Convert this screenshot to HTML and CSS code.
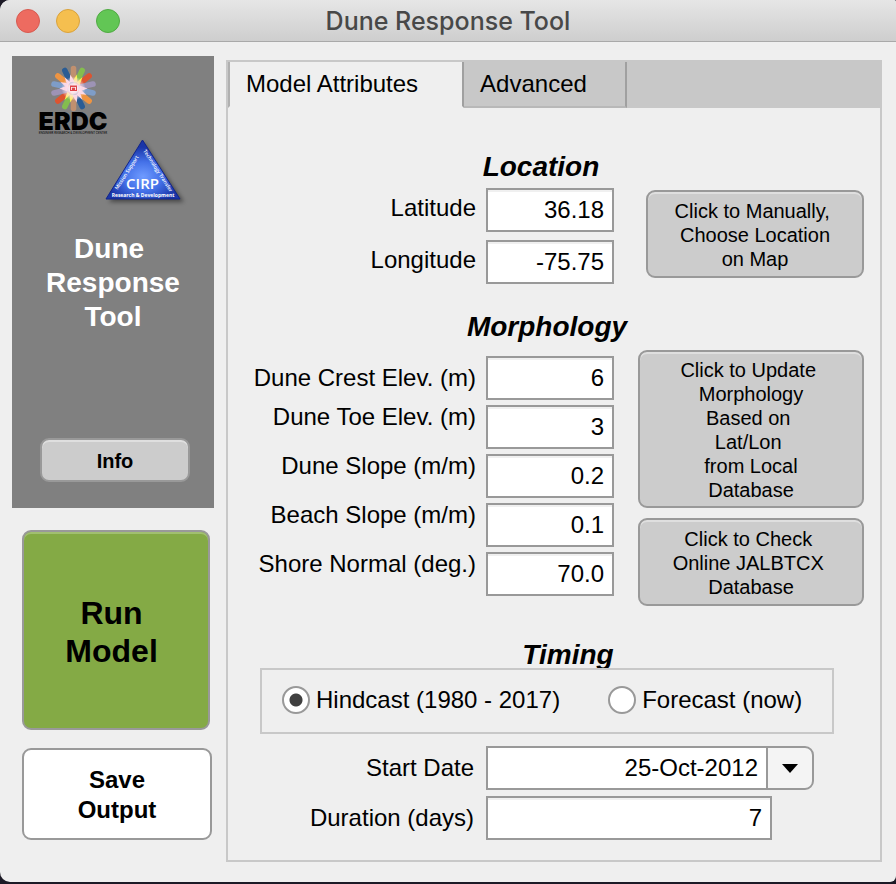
FILE: index.html
```html
<!DOCTYPE html>
<html lang="en">
<head>
<meta charset="utf-8">
<title>Dune Response Tool</title>
<link rel="stylesheet" href="styles.css">
</head>
<body>
<div class="window">
  <header class="titlebar">
    <div class="lights">
      <button class="light light-close" type="button" aria-label="Close"></button>
      <button class="light light-min" type="button" aria-label="Minimize"></button>
      <button class="light light-max" type="button" aria-label="Zoom"></button>
    </div>
    <h1 class="title">Dune Response Tool</h1>
  </header>

  <main class="content">
    <aside class="sidebar">
      <div class="brand">
        <svg class="logo-erdc" viewBox="0 0 72 72" role="img" aria-label="ERDC">
          <defs>
            <radialGradient id="glow">
              <stop offset="0" stop-color="#fff"/>
              <stop offset=".4" stop-color="#ffe6f0" stop-opacity=".95"/>
              <stop offset=".75" stop-color="#fbd9e6" stop-opacity=".5"/>
              <stop offset="1" stop-color="#fff" stop-opacity="0"/>
            </radialGradient>
          </defs>
          <g transform="translate(37.5 24.5)">
            <g stroke-width="5.6" stroke-linecap="round">
              <path stroke="#c0906f" d="M0-6V-20M0 6V20"/>
              <path transform="rotate(25.7)" stroke="#84bd4e" d="M0-6V-20M0 6V20"/>
              <path transform="rotate(51.4)" stroke="#dc5430" d="M0-6V-20M0 6V20"/>
              <path transform="rotate(77.1)" stroke="#9d93b5" d="M0-6V-20M0 6V20"/>
              <path transform="rotate(102.9)" stroke="#7e9dc8" d="M0-6V-20M0 6V20"/>
              <path transform="rotate(128.6)" stroke="#ee9442" d="M0-6V-20M0 6V20"/>
              <path transform="rotate(154.3)" stroke="#2a5c94" d="M0-6V-20M0 6V20"/>
            </g>
            <g fill="#fdf04f">
              <path d="M-1-7L3.300-14L4-6Z"/>
              <path d="M3-6L9-11.500L6-3Z"/>
              <path d="M1 7L-3.300 14L-4 6Z"/>
              <path d="M-3 6L-9 11.500L-6 3Z"/>
            </g>
            <g fill="#fbd5e3">
              <path d="M-4-6L-3.300-14L1-7Z"/>
              <path d="M-6-3L-9-11.500L-3-6Z"/>
              <path d="M-6 0L-13-6.500L-5-5Z"/>
              <path d="M-6 3L-14 0L-6-3Z"/>
              <path d="M6 3L14 0L6-3Z"/>
              <path d="M5 5L13 6.500L6 0Z"/>
              <path d="M6 3L9 11.500L3 6Z"/>
              <path d="M4 6L3.300 14L-1 7Z"/>
            </g>
            <circle r="12" fill="url(#glow)"/>
            <path d="M-3.500-3H3.500V2.500H-3.500Z" fill="#e0454a"/>
            <path d="M-2 1.500v-3l1 1 1-1 1 1 1-1v3" fill="none" stroke="#fff" stroke-width=".8"/>
          </g>
          <text class="erdc-name" x="37" y="66" text-anchor="middle">ERDC</text>
          <text class="erdc-sub" x="37" y="70" text-anchor="middle">ENGINEER RESEARCH &amp; DEVELOPMENT CENTER</text>
        </svg>
        <svg class="logo-cirp" viewBox="0 0 82 72" role="img" aria-label="CIRP">
          <defs>
            <radialGradient id="cirp" cx=".5" cy=".62" r=".5">
              <stop offset="0" stop-color="#6f9bff"/>
              <stop offset=".5" stop-color="#4471e8"/>
              <stop offset="1" stop-color="#1a35a8"/>
            </radialGradient>
          </defs>
          <path class="cirp-shadow" d="M40 6L80 66H5Z"/>
          <path d="M38.500 4L76 63H2Z" fill="url(#cirp)" stroke="#10248c"/>
          <text class="cirp-name" x="38.500" y="53" text-anchor="middle">CIRP</text>
          <text class="cirp-base" x="39" y="61" text-anchor="middle">Research &amp; Development</text>
          <text class="cirp-side" transform="translate(13.5 54) rotate(-57)">Mission Support</text>
          <text class="cirp-side" transform="translate(39 15) rotate(57)">Technology Transfer</text>
        </svg>
        <h2 class="brand-name">Dune 
Response
Tool</h2>
        <button class="btn btn-info" type="button">Info</button>
      </div>
      <button class="btn btn-run" type="button">Run 
Model </button>
      <button class="btn btn-save" type="button">Save
Output</button>
    </aside>

    <section class="panel">
      <nav class="tabs" role="tablist">
        <button class="tab tab-active" type="button" role="tab" aria-selected="true">Model Attributes</button>
        <button class="tab" type="button" role="tab" aria-selected="false">Advanced</button>
      </nav>

      <form class="form">
        <section class="location">
          <h2 class="heading">Location</h2>
          <div class="columns">
            <div class="fields">
              <div class="field"><label for="lat">Latitude</label><input id="lat" type="text" value="36.18"></div>
              <div class="field"><label for="lon">Longitude</label><input id="lon" type="text" value="-75.75"></div>
            </div>
            <div class="actions">
              <button class="btn btn-action btn-map" type="button">Click to Manually, 
Choose Location
on Map</button>
            </div>
          </div>
        </section>

        <section class="morphology">
          <h2 class="heading">Morphology</h2>
          <div class="columns">
            <div class="fields">
              <div class="field"><label for="crest">Dune Crest Elev. (m)</label><input id="crest" type="text" value="6"></div>
              <div class="field field-top"><label for="toe">Dune Toe Elev. (m)</label><input id="toe" type="text" value="3"></div>
              <div class="field field-top"><label for="dune">Dune Slope (m/m)</label><input id="dune" type="text" value="0.2"></div>
              <div class="field field-top"><label for="beach">Beach Slope (m/m)</label><input id="beach" type="text" value="0.1"></div>
              <div class="field field-top"><label for="shore">Shore Normal (deg.)</label><input id="shore" type="text" value="70.0"></div>
            </div>
            <div class="actions">
              <button class="btn btn-action btn-update" type="button">Click to Update 
Morphology
Based on 
Lat/Lon 
from Local
Database</button>
              <button class="btn btn-action" type="button">Click to Check 
Online JALBTCX 
Database</button>
            </div>
          </div>
        </section>

        <section class="timing">
          <h2 class="heading">Timing</h2>
          <div class="modes" role="radiogroup" aria-label="Timing">
            <label class="mode"><input type="radio" name="mode" checked>Hindcast (1980 - 2017)</label>
            <label class="mode"><input type="radio" name="mode">Forecast (now)</label>
          </div>
          <div class="fields fields-timing">
            <div class="field">
              <label for="start">Start Date</label>
              <div class="date">
                <input id="start" type="text" value="25-Oct-2012">
                <button class="date-open" type="button" aria-label="Open calendar">
                  <svg width="16" height="9" viewBox="0 0 16 9"><path d="M0 0H16L8 9Z"/></svg>
                </button>
              </div>
            </div>
            <div class="field">
              <label for="days">Duration (days)</label>
              <input id="days" class="days" type="text" value="7">
            </div>
          </div>
        </section>
      </form>
    </section>
  </main>
</div>
</body>
</html>
```
FILE: styles.css
```css
* { box-sizing: border-box; }

body {
  margin: 0;
  min-height: 100vh;
  padding-bottom: 2px;
  display: flex;
  flex-direction: column;
  background: #1c1a26;
  color: #000;
  font: 24px/24px "Liberation Sans", Arial, sans-serif;
}

button, input { font: inherit; color: inherit; margin: 0; }
h1, h2 { margin: 0; }

.window {
  flex: 1;
  display: flex;
  flex-direction: column;
  border-radius: 10px 2px 6px 10px;
  overflow: hidden;
  background: #efefef;
}

/* Title bar */
.titlebar {
  display: grid;
  grid-template-columns: 1fr auto 1fr;
  align-items: center;
  height: 42px;
  padding: 0 16px;
  background: linear-gradient(#e6e6e6, #cecece);
  border-bottom: 1px solid #a9a9a9;
}
.lights { display: flex; gap: 16px; }
.light {
  width: 24px;
  height: 24px;
  padding: 0;
  border: 1px solid;
  border-radius: 50%;
}
.light-close { background: #ed6b60; border-color: #d75a50; }
.light-min { background: #f5bf4f; border-color: #d9a23c; }
.light-max { background: #62c655; border-color: #50aa43; }
.title {
  font: 500 25px/30px Inter, sans-serif;
  color: #484848;
}

/* Main area */
.content {
  flex: 1;
  display: grid;
  grid-template-columns: 202px 1fr;
  gap: 12px;
  padding: 14px 14px 20px 12px;
}

.sidebar { display: flex; flex-direction: column; align-items: flex-start; }
.brand {
  width: 100%;
  height: 452px;
  display: flex;
  flex-direction: column;
  background: #808080;
  padding: 8px 24px 26px;
}
.logo-erdc { width: 72px; height: 72px; overflow: visible; }
.logo-cirp { width: 82px; height: 72px; align-self: flex-end; margin-right: 4px; overflow: visible; }
.erdc-name { font: 900 25px Inter, sans-serif; }
.erdc-sub { font: 400 3px Lato, sans-serif; }
.cirp-shadow { fill: #222; opacity: .6; filter: blur(2px); }
.cirp-name { font: 600 15px "Open Sans", sans-serif; fill: #fff; }
.cirp-base { font: 700 5px "Open Sans", sans-serif; fill: #fff; }
.cirp-side { font: 600 5px "Open Sans", sans-serif; fill: #fff; }
.brand-name {
  margin-top: 24px;
  color: #fff;
  font-size: 28px;
  line-height: 34px;
  text-align: center;
  white-space: pre;
}

.btn {
  padding: 2px 0 0;
  border: 2px solid #999;
  border-radius: 9px;
  background: #ccc;
  box-shadow: inset 0 2px #dfdfdf;
  text-align: center;
  white-space: pre;
}
.btn-info {
  width: 150px;
  height: 44px;
  margin: auto 0 0 auto;
  font-size: 20px;
  font-weight: 700;
}
.btn-run {
  width: 188px;
  height: 200px;
  margin: 22px 0 0 10px;
  padding-top: 4px;
  background: #84aa45;
  box-shadow: inset 0 2px #a1bf70;
  font-size: 32px;
  line-height: 38px;
  font-weight: 700;
}
.btn-save {
  width: 190px;
  height: 92px;
  margin: 18px 0 0 10px;
  background: #fff;
  box-shadow: none;
  line-height: 30px;
  font-weight: 700;
}

/* Tabbed panel */
.panel {
  display: flex;
  flex-direction: column;
  margin-top: 4px;
  border: 2px solid #c8c8c8;
}
.tabs {
  display: flex;
  height: 46px;
  background: #c8c8c8;
}
.tab {
  padding: 0 38px 0 16px;
  border: 0;
  border-right: 2px solid #a0a0a0;
  border-bottom: 2px solid #b8b8b8;
  background: #c8c8c8;
}
.tab-active {
  padding-right: 44px;
  border-left: 2px solid #b0b0b0;
  border-bottom-color: #efefef;
  background: #efefef;
}

.form { padding: 44px 16px 20px; }
.heading {
  height: 28px;
  font-size: 28px;
  line-height: 30px;
  font-style: italic;
  text-align: center;
}
.location .heading { padding-right: 26px; }
.morphology .heading { padding-right: 14px; }
.timing .heading { padding-left: 28px; }

.columns {
  display: grid;
  grid-template-columns: 1fr 226px;
  gap: 24px;
}
.fields { display: flex; flex-direction: column; gap: 5px; }
.field {
  display: flex;
  justify-content: flex-end;
  align-items: center;
  gap: 10px;
}
.field-top { align-items: flex-start; }
.field label { white-space: nowrap; }

input[type="text"] {
  width: 128px;
  height: 44px;
  padding: 0 8px;
  border: 2px solid #999;
  border-radius: 0;
  background: #fff;
  box-shadow: inset 0 2px #f0f0f0;
  text-align: right;
}

.actions { display: flex; flex-direction: column; gap: 10px; }
.btn-action {
  min-height: 88px;
  font-size: 20px;
  line-height: 24px;
}
.btn-map { width: 218px; align-self: flex-end; }
.btn-update { height: 158px; }

.location .columns { padding-top: 8px; }
.location .fields { gap: 8px; }
.location label { padding-bottom: 4px; }
.location .actions { padding-top: 2px; }
.morphology { margin-top: 28px; }
.morphology .columns { padding-top: 10px; }
.morphology .fields { padding-top: 6px; }
.timing { margin-top: 34px; }

/* The group box covers the descender of the heading above it */
.modes {
  position: relative;
  display: flex;
  align-items: center;
  gap: 48px;
  height: 66px;
  margin: 0 30px 0 16px;
  padding: 0 20px 2px;
  border: 2px solid #c8c8c8;
  background: #efefef;
}
.mode { display: flex; align-items: center; gap: 6px; }
.mode input {
  appearance: none;
  width: 28px;
  height: 28px;
  margin: 0;
  border: 2px solid #999;
  border-radius: 50%;
  background: #fff;
}
.mode input:checked { background: radial-gradient(circle, #404040 6px, #fff 7px); }

.fields-timing { gap: 6px; padding: 12px 50px 0 0; }
.fields-timing .field { gap: 12px; }
.date { display: flex; }
.date input[type="text"] {
  width: 280px;
  border-right: 0;
  box-shadow: none;
}
.date-open {
  width: 48px;
  padding: 0;
  border: 2px solid #999;
  border-radius: 0 9px 9px 0;
  background: #f4f4f4;
}
.date-open svg { display: block; margin: auto; }
.field .days { width: 286px; margin-right: 42px; }
```
